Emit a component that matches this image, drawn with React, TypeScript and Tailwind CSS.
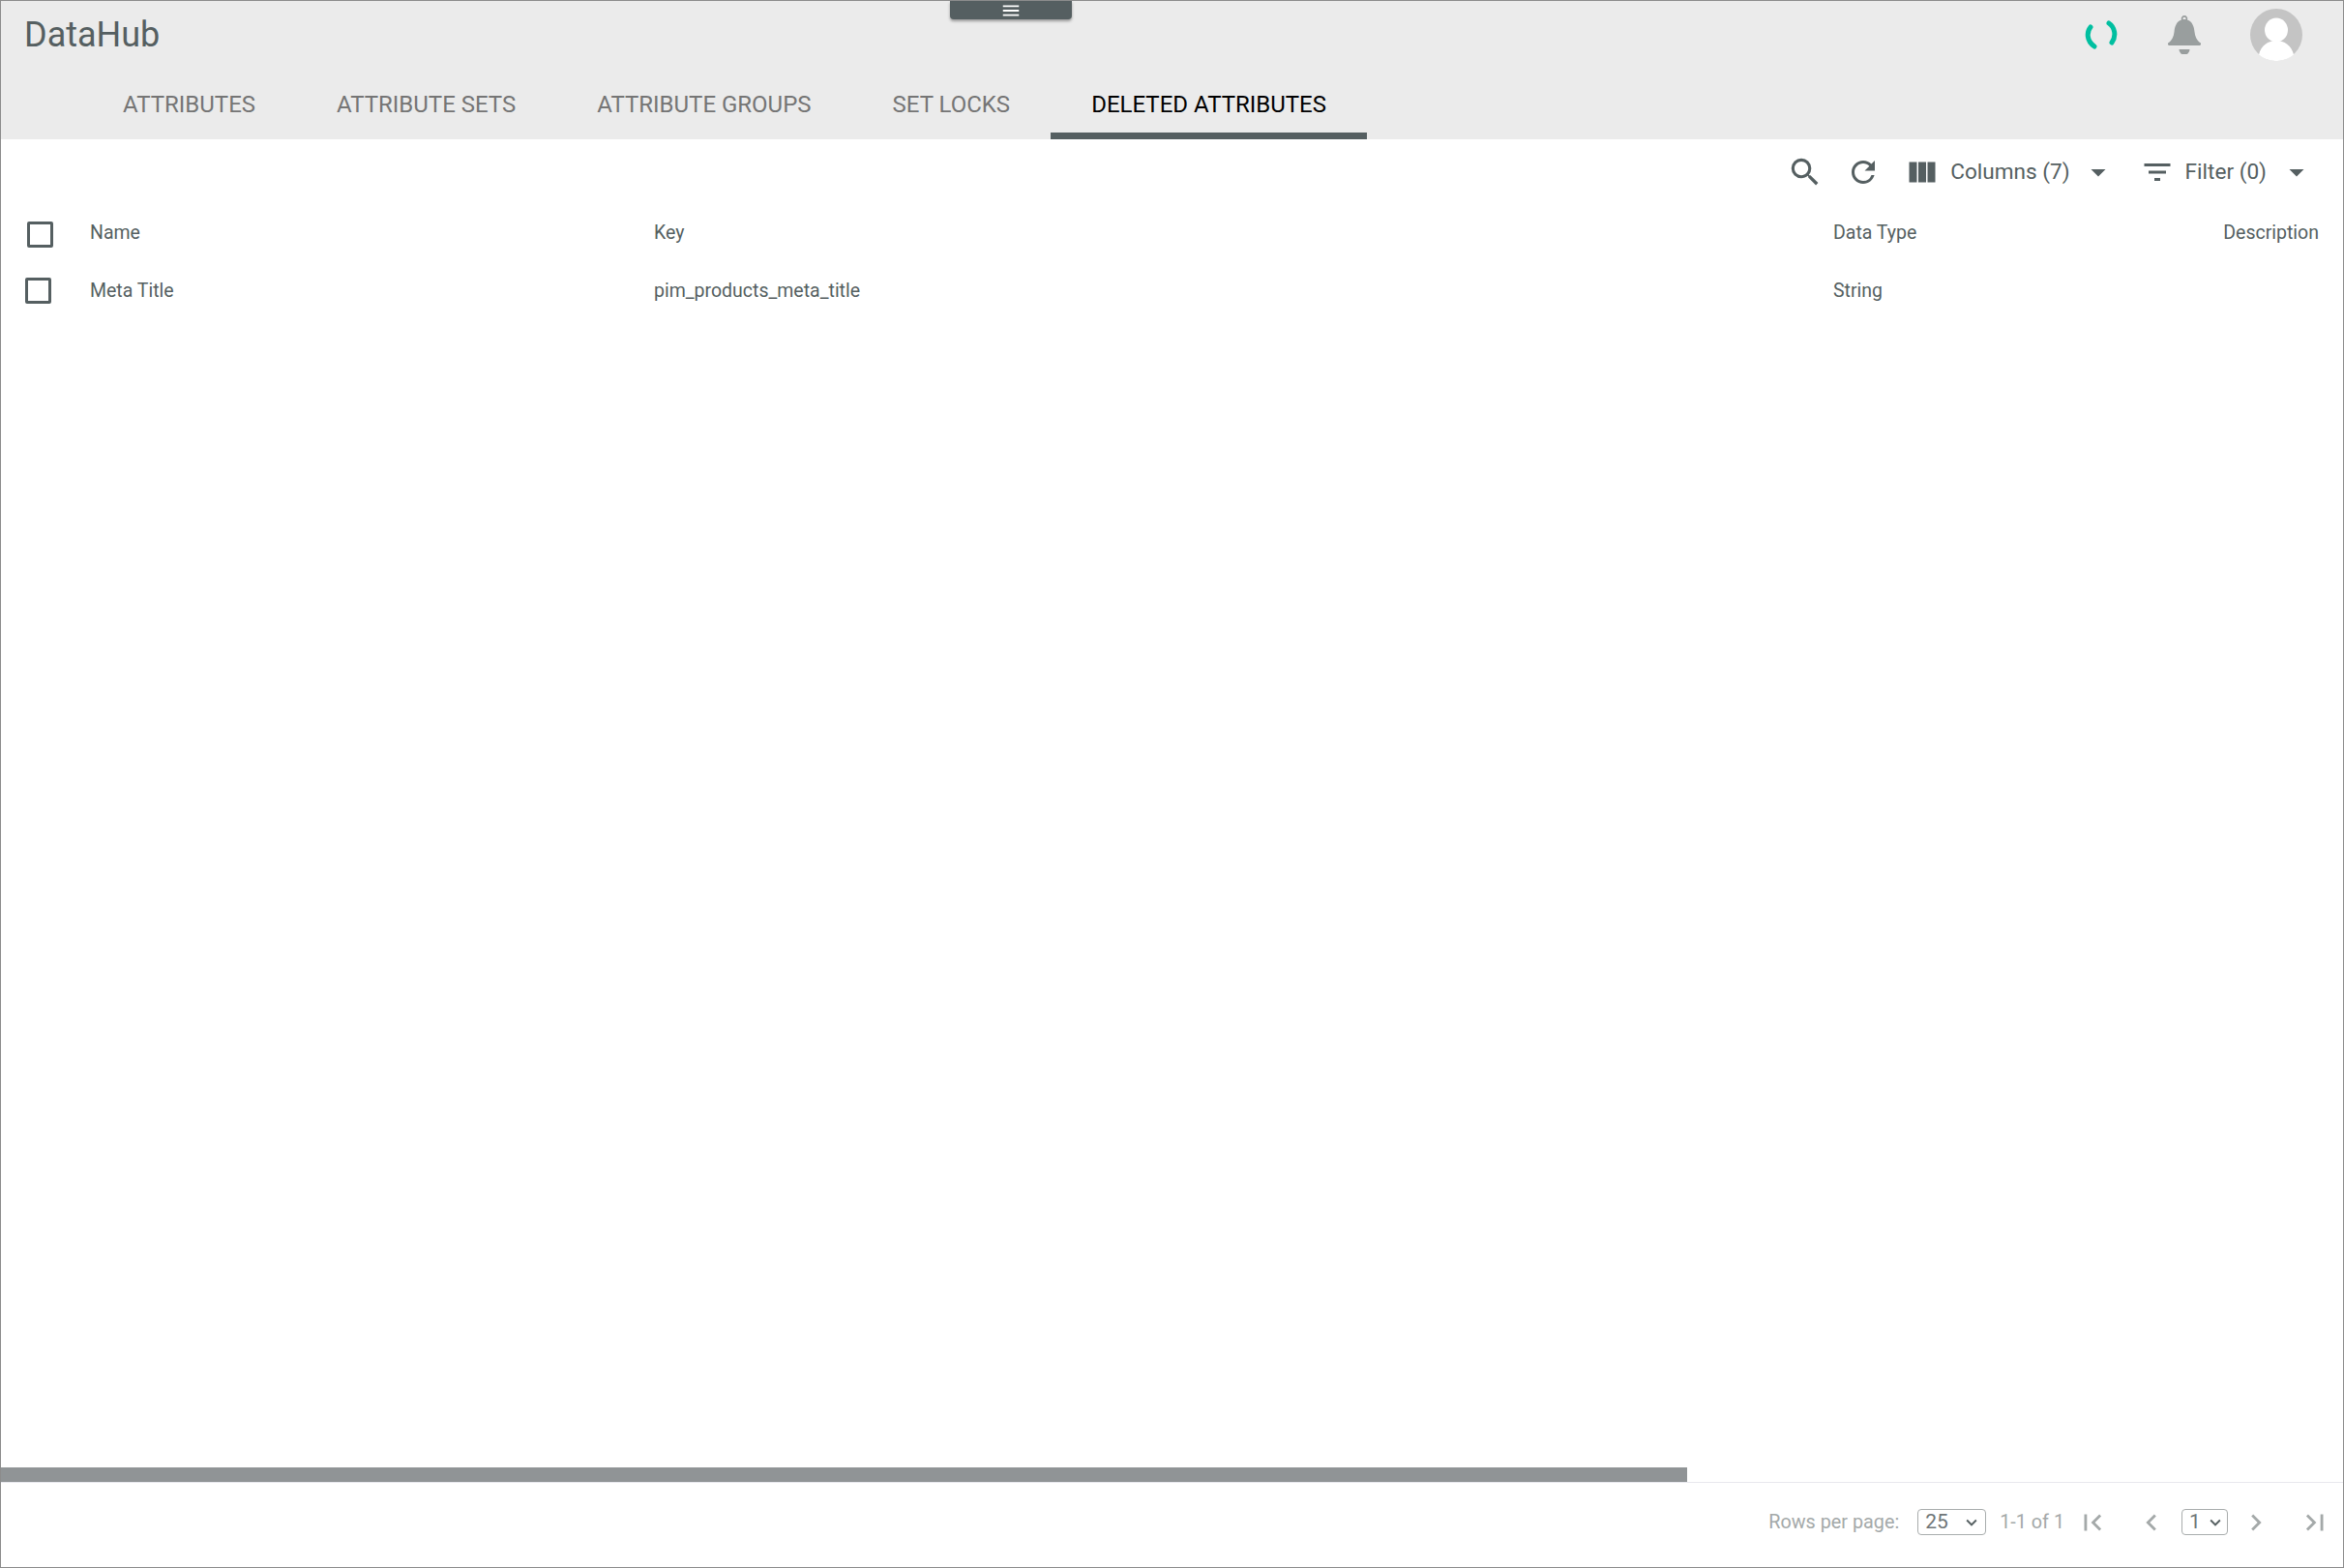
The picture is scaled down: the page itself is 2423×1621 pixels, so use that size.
import { MdSearch, MdRefresh, MdViewColumn, MdFilterList, MdArrowDropDown, MdFirstPage, MdLastPage, MdChevronLeft, MdChevronRight, MdKeyboardArrowDown, MdMenu } from "react-icons/md";

const tabs = ["ATTRIBUTES", "ATTRIBUTE SETS", "ATTRIBUTE GROUPS", "SET LOCKS", "DELETED ATTRIBUTES"];

const Checkbox = ({ className }: { className: string }) => (
  <span className={`block w-[27px] h-[27px] rounded-[2px] border-[3px] border-[#555f61] ${className}`} />
);

const Spinner = () => (
  <svg width="34" height="30" viewBox="0 0 34 30" fill="none" stroke="#00bfa0" strokeWidth="5" strokeLinecap="round">
    <path d="M6 7C2 12 1.500 21 10 27" />
    <path d="M25 3C31 7 33 16 28 23" />
  </svg>
);

const Bell = () => (
  <svg width="34" height="40" viewBox="0 0 34 40" fill="#999e9e" fillRule="evenodd">
    <path d="M17 0a3.200 3.200 0 0 1 3 4.400C25 6 27 11 27.500 17 28 22 30 25.500 33 28a1.500 1.500 0 0 1-1 3H2a1.500 1.500 0 0 1-1-3C4 25.500 6 22 6.500 17 7 11 9 6 14 4.400A3.200 3.200 0 0 1 17 0zm0 1.800a1.500 1.500 0 0 0-1.400 2.200h2.800A1.500 1.500 0 0 0 17 1.800z" />
    <path d="M11.500 35h11a5.500 5.500 0 0 1-11 0z" />
  </svg>
);

const Avatar = () => (
  <svg width="54" height="54" viewBox="0 0 54 54">
    <circle cx="27" cy="27" r="27" fill="#c4c4c4" />
    <ellipse cx="27" cy="22" rx="12" ry="12.500" fill="#fff" />
    <path d="M9 47.500C11 38 19 33 27 33s16 5 18 14.500A27 27 0 0 1 27 54a27 27 0 0 1-18-6.500z" fill="#fff" />
  </svg>
);

const PageSelect = ({ value, className }: { value: string; className: string }) => (
  <div className={`h-[27px] flex items-center justify-between border border-[#a9adad] rounded-[4px] text-[21px] text-[#6f7678] ${className}`}>
    <span>{value}</span>
    <MdKeyboardArrowDown className="text-[22px] text-[#555f61]" />
  </div>
);

export default function App() {
  return (
    <div className="relative h-screen w-full flex flex-col bg-white border border-[#8c8c8c] font-['Roboto',sans-serif] text-[#555f61] overflow-hidden">
      <div className="absolute top-0 left-[981px] w-[126px] h-[19px] bg-[#555f61] rounded-b-[4px] shadow-[0_2px_3px_rgba(0,0,0,0.35)] flex items-center justify-center">
        <MdMenu className="text-white text-[22px]" />
      </div>

      <header className="h-[143px] shrink-0 bg-[#ebebeb] flex flex-col">
        <div className="flex-1 flex items-start justify-between">
          <h1 className="ml-[24px] mt-[15px] text-[36px] leading-[40px] font-normal">DataHub</h1>
          <div className="flex items-start mr-[42px]">
            <div className="mt-[20px]"><Spinner /></div>
            <div className="mt-[15px] ml-[52px]"><Bell /></div>
            <div className="mt-[8px] ml-[51px]"><Avatar /></div>
          </div>
        </div>
        <nav className="flex h-[58px] ml-[84px]">
          {tabs.map((t, i) => (
            <div
              key={t}
              className={`px-[42px] pb-[7px] flex items-center text-[24px] border-b-[7px] ${
                i === 4 ? "text-black border-[#555f61]" : "text-[#757575] border-transparent"
              }`}
            >
              {t}
            </div>
          ))}
        </nav>
      </header>

      <div className="h-[68px] shrink-0 flex items-center justify-end pr-[30px] text-[22.6px]">
        <MdSearch className="text-[38px] mr-[23px]" />
        <MdRefresh className="text-[36px] mr-[25px]" />
        <MdViewColumn className="text-[36px] mr-[11px]" />
        <span>Columns (7)</span>
        <MdArrowDropDown className="text-[36px] ml-[11px] mr-[25px]" />
        <MdFilterList className="text-[36px] mr-[11px]" />
        <span>Filter (0)</span>
        <MdArrowDropDown className="text-[36px] ml-[13px]" />
      </div>

      <div className="flex-1 text-[19.5px]">
        <div className="h-[58px] grid grid-cols-[92px_583px_1219px_1fr] items-center pr-[25px]">
          <Checkbox className="ml-[27px] mt-[3px]" />
          <span>Name</span>
          <span>Key</span>
          <div className="flex justify-between"><span>Data Type</span><span>Description</span></div>
        </div>
        <div className="h-[62px] grid grid-cols-[92px_583px_1219px_1fr] items-center">
          <Checkbox className="ml-[25px] mb-[2px]" />
          <span>Meta Title</span>
          <span>pim_products_meta_title</span>
          <span>String</span>
        </div>
      </div>

      <div className="h-[15px] w-[1743px] shrink-0 bg-[#909496]" />
      <footer className="h-[88px] shrink-0 border-t border-[#e8e8ee] flex items-center justify-end pr-[12px] pb-[6px] text-[19.8px] text-[#a4a9a9]">
        <span>Rows per page:</span>
        <PageSelect value="25" className="w-[71px] ml-[19px] pl-[7px] pr-[3px]" />
        <span className="ml-[14px]">1-1 of 1</span>
        <MdFirstPage className="text-[34px] ml-[12px]" />
        <MdChevronLeft className="text-[34px] ml-[27px]" />
        <PageSelect value="1" className="w-[48px] ml-[14px] pl-[7px] pr-[1px]" />
        <MdChevronRight className="text-[34px] ml-[12px]" />
        <MdLastPage className="text-[34px] ml-[27px]" />
      </footer>
    </div>
  );
}
